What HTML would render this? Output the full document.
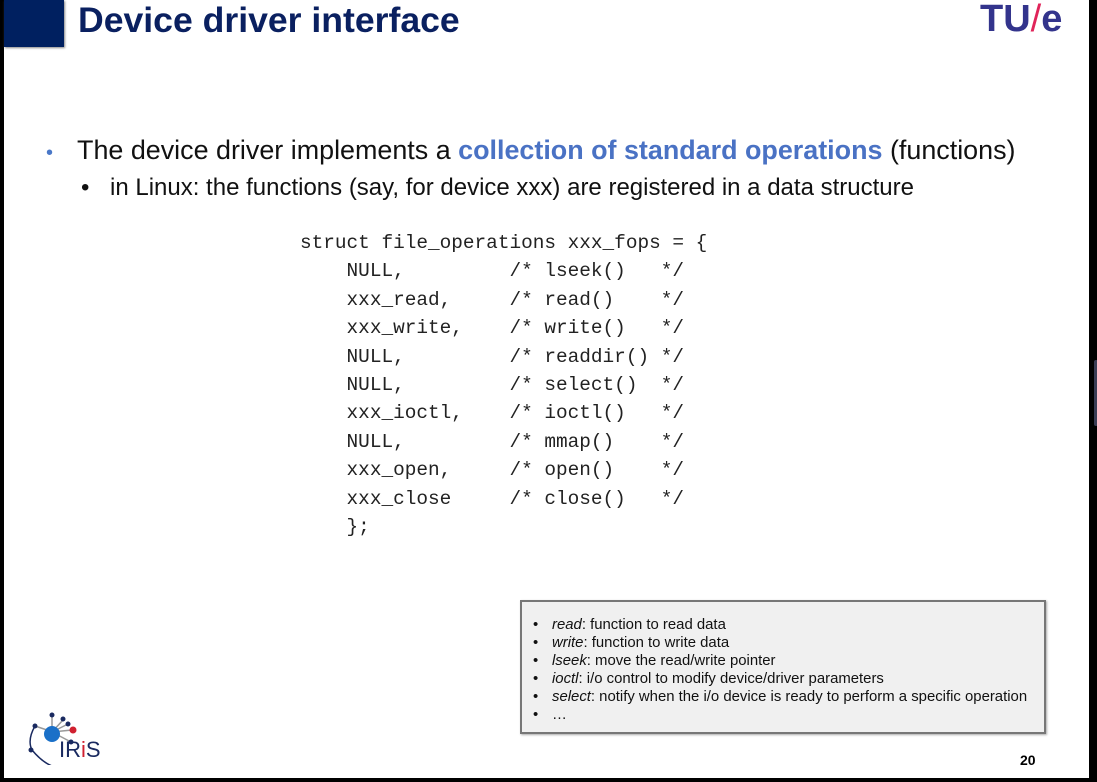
<!DOCTYPE html>
<html><head><style>
body{margin:0;width:1097px;height:782px;background:#000;position:relative;overflow:hidden;font-family:"Liberation Sans",sans-serif}
.slide{position:absolute;left:4px;top:0;width:1085px;height:778px;background:#fff}
.hd{position:absolute;left:0;top:0;width:60px;height:47px;background:#002060;box-shadow:1px 1px 2px #888}
h1{position:absolute;left:74px;top:0;margin:0;font-size:35.6px;font-weight:bold;color:#0a2060;line-height:40px}
.tue{position:absolute;left:976px;top:-2px;font-size:38px;font-weight:bold;color:#33348c;letter-spacing:0px}
.b1{position:absolute;left:42px;top:135px;font-size:26.9px;color:#111;white-space:nowrap}
.b1 .d{color:#4a78c8;margin-right:24px;font-size:20px}
.b1 b{color:#4a72c4}
.b2{position:absolute;left:77px;top:174px;font-size:24px;color:#111;white-space:nowrap}
.b2 span{display:inline-block;width:29px}
pre{position:absolute;left:296px;top:229px;margin:0;font-family:"Liberation Mono",monospace;font-size:19.4px;line-height:28.4px;color:#222}
.box{position:absolute;left:516px;top:600px;width:526px;height:134px;background:#f0f0f0;border:2px solid #777;box-sizing:border-box;box-shadow:1px 1px 2px #aaa}
.box ul{margin:0;padding:14px 0 0 30px;font-size:14.9px;line-height:18px;color:#111;list-style:none;white-space:nowrap}
.box li{position:relative}
.box li:before{content:"•";position:absolute;left:-19px}
.pg{position:absolute;left:1016px;top:752px;font-size:14px;font-weight:bold}
.tab{position:absolute;left:1094px;top:360px;width:4px;height:66px;background:#3a3d55;border-radius:3px}
</style></head><body>
<div class="slide">
<div class="hd"></div>
<h1>Device driver interface</h1>
<div class="tue">TU<span style="color:#e0245a;font-weight:normal">/</span>e</div>
<div class="b1"><span class="d">•</span>The device driver implements a <b>collection of standard operations</b> (functions)</div>
<div class="b2"><span>•</span>in Linux: the functions (say, for device xxx) are registered in a data structure</div>
<pre>struct file_operations xxx_fops = {
    NULL,         /* lseek()   */
    xxx_read,     /* read()    */
    xxx_write,    /* write()   */
    NULL,         /* readdir() */
    NULL,         /* select()  */
    xxx_ioctl,    /* ioctl()   */
    NULL,         /* mmap()    */
    xxx_open,     /* open()    */
    xxx_close     /* close()   */
    };</pre>
<div class="box"><ul>
<li><i>read</i>: function to read data</li>
<li><i>write</i>: function to write data</li>
<li><i>lseek</i>: move the read/write pointer</li>
<li><i>ioctl</i>: i/o control to modify device/driver parameters</li>
<li><i>select</i>: notify when the i/o device is ready to perform a specific operation</li>
<li>…</li></ul></div>
<svg style="position:absolute;left:18px;top:700px" width="90" height="65">
<g stroke="#999" stroke-width="1.5" fill="none"><path d="M30 32 L30 15 M30 32 L41 20 M30 32 L46 24 M30 32 L50 30 M30 32 L49 42"/></g>
<path d="M13 26 Q5 40 10 50 Q20 62 30 66" stroke="#1a2a60" stroke-width="1.5" fill="none"/>
<path d="M13 26 L28 31" stroke="#999" stroke-width="1.5"/>
<circle cx="30" cy="34" r="8" fill="#1a70c8"/>
<g fill="#1a2a60"><circle cx="30" cy="15" r="2.5"/><circle cx="41" cy="19" r="2.5"/><circle cx="46" cy="24" r="2.5"/><circle cx="49" cy="42" r="2.5"/><circle cx="13" cy="26" r="2.5"/><circle cx="9" cy="50" r="2.5"/></g>
<circle cx="51" cy="30" r="3.5" fill="#d02030"/>
<text x="37" y="57" font-family="Liberation Sans" font-size="22" fill="#1a2a60">IR<tspan fill="#d02030">i</tspan>S</text>
</svg>
<div class="pg">20</div>
</div>
<div class="tab"></div>
</body></html>
